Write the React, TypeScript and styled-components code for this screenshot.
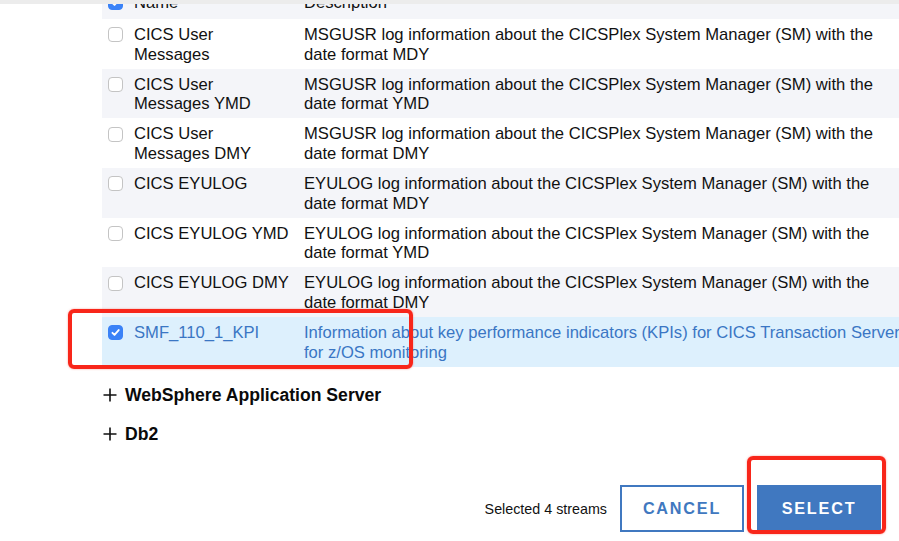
import React from 'react'
import styled, { createGlobalStyle, css } from 'styled-components'

type Stream = {
  name: string
  description: string
  selected?: boolean
}

const streams: Stream[] = [
  {
    name: 'CICS User Messages',
    description:
      'MSGUSR log information about the CICSPlex System Manager (SM) with the date format MDY',
  },
  {
    name: 'CICS User Messages YMD',
    description:
      'MSGUSR log information about the CICSPlex System Manager (SM) with the date format YMD',
  },
  {
    name: 'CICS User Messages DMY',
    description:
      'MSGUSR log information about the CICSPlex System Manager (SM) with the date format DMY',
  },
  {
    name: 'CICS EYULOG',
    description:
      'EYULOG log information about the CICSPlex System Manager (SM) with the date format MDY',
  },
  {
    name: 'CICS EYULOG YMD',
    description:
      'EYULOG log information about the CICSPlex System Manager (SM) with the date format YMD',
  },
  {
    name: 'CICS EYULOG DMY',
    description:
      'EYULOG log information about the CICSPlex System Manager (SM) with the date format DMY',
  },
  {
    name: 'SMF_110_1_KPI',
    description:
      'Information about key performance indicators (KPIs) for CICS Transaction Server for z/OS monitoring',
    selected: true,
  },
]

const BLUE = '#4078c0'

const GlobalStyle = createGlobalStyle`
  html, body {
    margin: 0;
    padding: 0;
    background: #ffffff;
    overflow: hidden;
  }
  body {
    font-family: "Liberation Sans", Helvetica, Arial, sans-serif;
    color: #111111;
  }
`

const Page = styled.div`
  position: relative;
  width: 899px;
  height: 541px;
  overflow: hidden;
  background: #ffffff;
`

const TopBar = styled.div`
  height: 4px;
  background: #ececec;
  position: relative;
  z-index: 1;
`

const ListViewport = styled.div`
  height: 363px;
  overflow: hidden;
`

const Table = styled.div`
  margin-top: -17px;
  margin-left: 102px;
  width: 804px;
  display: flex;
  flex-direction: column;
`

const Row = styled.div<{ $striped?: boolean; $selected?: boolean }>(
  ({ $striped, $selected }) => css`
    display: grid;
    grid-template-columns: 32px 170px 602px;
    padding: 6px 0 4px;
    font-size: 16.6px;
    line-height: 19.85px;
    background: ${$selected ? '#ddf0fd' : $striped ? '#f4f5f9' : '#ffffff'};
    color: ${$selected ? '#3a76c4' : '#111111'};
  `,
)

const HeaderRow = styled(Row)`
  padding: 6px 0 6px;
  background: #f4f5f9;
`

const CheckCell = styled.div`
  padding-left: 6px;
  height: 19.85px;
  display: flex;
  align-items: center;
`

const NameCell = styled.div`
  padding-right: 13px;
`

const DescCell = styled.div``

const Box = styled.span<{ $checked?: boolean }>(
  ({ $checked }) => css`
    box-sizing: border-box;
    width: 15px;
    height: 15px;
    border-radius: 4px;
    display: flex;
    align-items: center;
    justify-content: center;
    background: ${$checked ? '#3a82f7' : '#ffffff'};
    border: 1px solid ${$checked ? '#3a82f7' : '#c4c4c4'};
  `,
)

const Checkbox = ({ checked }: { checked?: boolean }) => (
  <Box $checked={checked}>
    {checked && (
      <svg width="11" height="11" viewBox="0 0 10 10">
        <path
          d="M2.2 5.3 L4.1 7.2 L7.9 2.8"
          fill="none"
          stroke="#ffffff"
          strokeWidth="1.7"
          strokeLinecap="round"
          strokeLinejoin="round"
        />
      </svg>
    )}
  </Box>
)

const Sections = styled.div`
  margin-top: 17px;
  padding-left: 103px;
  display: flex;
  flex-direction: column;
  gap: 17px;
`

const SectionToggle = styled.div`
  display: flex;
  align-items: center;
  gap: 8px;
  height: 22px;
  font-size: 17.6px;
  font-weight: bold;
  color: #0a0a0a;
`

const PlusIcon = () => (
  <svg width="14" height="14" viewBox="0 0 14 14">
    <path d="M7 0.5 V13.5 M0.5 7 H13.5" stroke="#111111" strokeWidth="1.6" />
  </svg>
)

const Footer = styled.div`
  margin-top: 40px;
  padding-right: 18px;
  display: flex;
  justify-content: flex-end;
  align-items: center;
  gap: 13px;
`

const SelectedCount = styled.span`
  font-size: 14.3px;
  color: #111111;
`

const Button = styled.button<{ $primary?: boolean }>(
  ({ $primary }) => css`
    box-sizing: border-box;
    width: 124px;
    height: 47px;
    margin: 0;
    padding: 0;
    font-family: "Liberation Sans", Helvetica, Arial, sans-serif;
    font-size: 16.2px;
    font-weight: bold;
    letter-spacing: 1.8px;
    border: 2px solid ${BLUE};
    background: ${$primary ? BLUE : '#ffffff'};
    color: ${$primary ? '#ffffff' : BLUE};
    cursor: pointer;
  `,
)

const Annotation = styled.div`
  position: absolute;
  box-sizing: border-box;
  border: 4px solid #f8261a;
  border-radius: 6px;
  box-shadow: 0 0 2px rgba(248, 38, 26, 0.5);
  pointer-events: none;
`

export default function App() {
  return (
    <>
      <GlobalStyle />
      <Page>
        <TopBar />
        <ListViewport>
          <Table>
            <HeaderRow>
              <CheckCell>
                <Checkbox checked />
              </CheckCell>
              <NameCell>Name</NameCell>
              <DescCell>Description</DescCell>
            </HeaderRow>
            {streams.map((s, i) => (
              <Row key={s.name} $striped={i % 2 === 1} $selected={s.selected}>
                <CheckCell>
                  <Checkbox checked={s.selected} />
                </CheckCell>
                <NameCell>{s.name}</NameCell>
                <DescCell>{s.description}</DescCell>
              </Row>
            ))}
          </Table>
        </ListViewport>
        <Sections>
          <SectionToggle>
            <PlusIcon />
            WebSphere Application Server
          </SectionToggle>
          <SectionToggle>
            <PlusIcon />
            Db2
          </SectionToggle>
        </Sections>
        <Footer>
          <SelectedCount>Selected 4 streams</SelectedCount>
          <Button>CANCEL</Button>
          <Button $primary>SELECT</Button>
        </Footer>
        <Annotation style={{ left: 68, top: 309, width: 345, height: 60 }} />
        <Annotation style={{ left: 747, top: 456, width: 139, height: 78 }} />
      </Page>
    </>
  )
}
